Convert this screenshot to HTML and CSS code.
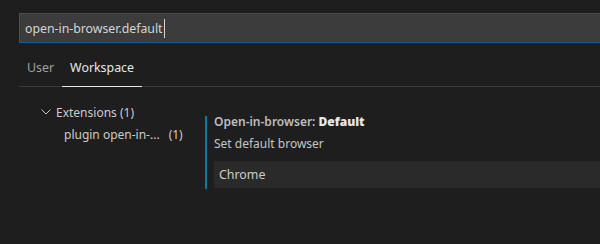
FILE: index.html
```html
<!DOCTYPE html>
<html lang="en">
<head>
    <meta charset="UTF-8">
    <title>Settings</title>
    <link rel="stylesheet" href="styles.css">
</head>
<body>
<div class="editor">
    <!-- Search -->
    <div class="search">
        <span class="query">open-in-browser.default</span><span class="caret"></span>
    </div>

    <!-- Scope tabs -->
    <div class="tabs">
        <span class="tab">User</span>
        <span class="tab active">Workspace</span>
    </div>

    <div class="body">
        <!-- Table of contents -->
        <div class="toc">
            <div class="toc-row">
                <svg class="chevron" width="12" height="12" viewBox="0 0 12 12">
                    <path d="M1.5 3.5 L6 8 L10.5 3.5" fill="none" stroke="#c5c5c5" stroke-width="1"/>
                </svg>
                <span>Extensions (1)</span>
            </div>
            <div class="toc-row child">
                <span class="toc-name">plugin open-in-...</span>
                <span class="count">(1)</span>
            </div>
        </div>

        <!-- Setting item -->
        <div class="setting">
            <div class="setting-title">Open-in-browser: <b>Default</b></div>
            <div class="setting-desc">Set default browser</div>
            <div class="setting-value">Chrome</div>
        </div>
    </div>
</div>
</body>
</html>
```

FILE: styles.css
```css
/* General Page Styling */
body {
    margin: 0;
    padding: 0;
    background-color: #1e1e1e;
    font-family: 'Noto Sans', 'Open Sans', sans-serif;
    font-size: 12px;
    color: #cccccc;
    overflow: hidden;
}

.editor {
    padding: 13px 0 0 19px;
}

/* Search box */
.search {
    height: 28px;
    background-color: #3c3c3c;
    border: 1px solid #0e5f99;
    border-right: none;
    display: flex;
    align-items: center;
    padding-left: 5px;
    font-size: 12.3px;
    color: #d4d4d4;
}

.caret {
    display: inline-block;
    width: 1px;
    height: 19px;
    margin-left: 1px;
    background-color: #d4d4d4;
}

/* Tabs */
.tabs {
    display: flex;
    height: 43px;
    border-bottom: 1px solid #3c3c3c;
}

.tab {
    display: flex;
    align-items: center;
    padding: 6px 8px 0 8px;
    color: #a0a0a0;
    margin-bottom: -1px;
    border-bottom: 1px solid transparent;
    font-size: 12.4px;
}

.tab.active {
    color: #e7e7e7;
    border-bottom-color: #e7e7e7;
}

/* Body */
.body {
    display: flex;
    padding-top: 14px;
}

.toc {
    box-sizing: border-box;
    width: 186px;
    padding-left: 21px;
}

.toc-row {
    display: flex;
    align-items: center;
    height: 22px;
    color: #cccccc;
}

.chevron {
    margin-right: 4px;
}

.toc-row.child {
    padding-left: 24px;
}

.count {
    margin-left: 9px;
}

.setting {
    flex: 1;
    margin-top: 15px;
    border-left: 2px solid #0a7aad;
    padding: 0 0 1px 7px;
}

.setting-title {
    line-height: 14px;
    margin-top: -1px;
    color: #bdbdbd;
    font-weight: 600;
}

.setting-title b {
    color: #e7e7e7;
}

.setting-desc {
    margin-top: 7px;
    line-height: 16px;
    color: #c5c5c5;
}

.setting-value {
    margin-top: 9px;
    height: 27px;
    background-color: #2a2a2a;
    display: flex;
    align-items: center;
    padding-left: 5px;
    color: #cccccc;
    font-size: 12.4px;
}
```
